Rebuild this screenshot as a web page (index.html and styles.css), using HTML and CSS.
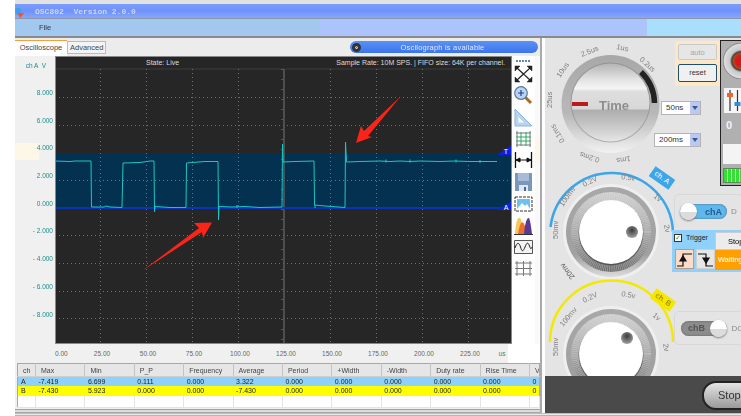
FILE: index.html
```html
<!DOCTYPE html>
<html lang="en">
<head>
    <meta charset="UTF-8">
    <meta name="viewport" content="width=device-width, initial-scale=1.0">
    <title>OSC802 Version 2.0.0</title>
    <link rel="stylesheet" href="styles.css">
</head>
<body>
    <div class="app">
        <div class="top-strip"></div>
        <div class="titlebar">
            <svg class="app-icon" viewBox="0 0 10 10"><circle cx="3" cy="3" r="3" fill="#3aa0f0"/><path d="M2 5h7L5.500 10z" fill="#f0562a"/></svg>
            <span class="app-title">OSC802  Version 2.0.0</span>
        </div>
        <div class="menubar">
            <span class="menu-item">File</span>
            <span class="menu-mid"></span>
            <span class="menu-end"></span>
        </div>

        <div class="workspace">
            <!-- Scope side -->
            <div class="scope-pane">
                <div class="tabs">
                    <span class="tab tab-active">Oscilloscope</span>
                    <span class="tab">Advanced</span>
                    <div class="status-bar">
                        <span class="play-btn"></span>
                        <span class="status-text">Oscilograph is available</span>
                    </div>
                </div>

                <div class="plot-row">
                    <div class="y-axis">
                        <div class="y-title">ch A  V</div>
                        <span>8.000</span>
                        <span>6.000</span>
                        <span class="y-cream">4.000</span>
                        <span>2.000</span>
                        <span>0.000</span>
                        <span>- 2.000</span>
                        <span>- 4.000</span>
                        <span>- 6.000</span>
                        <span>- 8.000</span>
                    </div>

                    <svg class="scope" viewBox="55 56 457 288" preserveAspectRatio="none">
                        <rect x="55" y="56" width="457" height="288" fill="#262626"/>
                        <rect x="55" y="153" width="457" height="55" fill="#04314f"/>
                        <path d="M55 69H512" stroke="#3d3d3d"/>
                        <path class="grid" d="M55 97.500H512M55 125.500H512M55 180.500H512M55 235.500H512M55 263.500H512M55 291.500H512M55 318.500H512"/>
                        <path class="grid" d="M100.500 69V344M146.500 69V344M192.500 69V344M238.500 69V344M330.500 69V344M376.500 69V344M422.500 69V344M468.500 69V344"/>
                        <path d="M284 69V344" stroke="#5c5c5c" stroke-width="1.500"/>
                        <path class="center-ticks" d="M282 69V344"/>
                        <path d="M55 208H512" stroke="#0a34b8" stroke-width="2"/>
                        <polyline class="trace" points="55,161 70,161.500 75,161 91,161 91.500,207 104,207 106,206 110,207 122,207.500 123,163 140,162.500 150,161 154,161 154.500,212 155,206.500 170,207.500 186,207.500 186.500,163 198,162 205,161.500 218,161.500 218.500,220 219,206.500 232,207 245,206.500 260,207.500 282,207 282.500,144 283,162 295,161.500 314,161 314.500,205 325,206 345,207.500 345.500,142 346.500,162 360,161.500 380,161 390,161.500 400,161 410,161.500 420,161 440,161.500 455,161 470,161.500 497,161.500"/>
                        <path class="trace" d="M386 159.500v3M410 159.500v3M456 159.500v3M480 160v3M237 205v3M315 205v3"/>
                        <path d="M512 145V155H497z" fill="#0a22e0"/>
                        <path d="M512 201V210H497z" fill="#0a22e0"/>
                        <text class="marker-text" x="506" y="154">T</text>
                        <text class="marker-text" x="506" y="210">A</text>
                        <text class="scope-text" x="146" y="65">State: Live</text>
                        <text class="scope-text" x="505" y="65" text-anchor="end">Sample Rate: 10M SPS. | FIFO size: 64K per channel.</text>
                        <!-- arrows drawn on the screenshot -->
                        <polygon class="arrow" points="142,271 199,228 194,223 212,222.500 203,238 202,232"/>
                        <polygon class="arrow" points="401,96 368,136 372,137 356,143 361,126 364,131"/>
                    </svg>

                    <div class="tools">
                        <svg width="19" height="2" viewBox="0 0 19 2"><path d="M2 1H17" stroke="#2a5fa0" stroke-width="1.500" stroke-dasharray="2 1"/></svg>
                        <svg width="19" height="18" viewBox="0 0 19 18" fill="#222" stroke="#222"><path d="M3 3L16 15M16 3L3 15" stroke-width="1.200"/><path d="M1 1H6L1 6zM18 1H13L18 6zM1 17H6L1 12zM18 17H13L18 12z" stroke-width="0.500"/></svg>
                        <svg width="19" height="19" viewBox="0 0 19 19"><path d="M11 11L17 17" stroke="#b06a20" stroke-width="3"/><circle cx="7" cy="7" r="6.300" fill="#b8d6f4" stroke="#5a7a9a" stroke-width="1.200"/><path d="M4 7H10M7 4V10" stroke="#24408a" stroke-width="1.200"/></svg>
                        <svg width="19" height="19" viewBox="0 0 19 19"><path d="M1 1V18H18z" fill="#b8d4f0" stroke="#8ab4e0"/><path d="M4.500 9V14.500H10z" fill="#fff"/></svg>
                        <svg width="19" height="18" viewBox="0 0 19 18" fill="none"><path d="M2 3H17M2 15H17M3 1V17M16 1V17" stroke="#777"/><path d="M2 7H17M2 11H17M7 2V16M12 2V16" stroke="#2aa860"/></svg>
                        <svg width="19" height="18" viewBox="0 0 19 18" fill="none" stroke="#111"><path d="M1.500 1V17M17.500 1V17" stroke-width="1.300"/><path d="M2 9H17"/><path d="M2 9L6 7V11zM17 9L13 7V11z" fill="#111"/></svg>
                        <svg width="19" height="20" viewBox="0 0 19 20"><path d="M1 1H18V19H1z" fill="#7a97bc"/><path d="M4 1H15V9H4z" fill="#a8bcd8"/><path d="M5 13H14V19H5z" fill="#dfe6f0"/><path d="M10 15H12V19H10z" fill="#49678f"/></svg>
                        <svg width="19" height="18" viewBox="0 0 19 18"><path d="M1 2H18V16H1z" fill="#fff" stroke="#333" stroke-dasharray="3 1"/><path d="M3 4H16V14H3z" fill="#6cc0f4"/><path d="M3 14L8 8L11 11L13 9L16 14z" fill="#fff"/></svg>
                        <svg width="19" height="19" viewBox="0 0 19 19"><path d="M1 18C2 4 4 1 6 2S8 12 9 18z" fill="#f6c860"/><path d="M4 18C6 6 8 5 9.500 7S12 14 13 18z" fill="#ef6f2e"/><path d="M10 18C11 6 13 2 14.500 2S17 10 18 18z" fill="#5a3a98"/><path d="M0 18.500H19" stroke="#333"/></svg>
                        <svg width="19" height="18" viewBox="0 0 19 18" fill="#f4f4f4"><path d="M.500 2.500H18.500V15.500H.500z" stroke="#555"/><path d="M1 10C3 4 5 4 6.500 9S9 14 11 9 14 4 15.500 8 17 11 18 9" fill="none" stroke="#222"/></svg>
                        <svg width="19" height="19" viewBox="0 0 19 19" fill="none" stroke="#777"><path d="M1 4H18M1 9.500H18M1 15H18M3 2V17M9.500 2V17M16 2V17"/></svg>
                    </div>
                    <div class="tools-gap"><span class="cream-patch"></span></div>
                </div>

                <div class="x-axis">
                    <span class="x-first">0.00</span>
                    <span>25.00</span>
                    <span>50.00</span>
                    <span>75.00</span>
                    <span>100.00</span>
                    <span>125.00</span>
                    <span>150.00</span>
                    <span>175.00</span>
                    <span>200.00</span>
                    <span>225.00</span>
                    <span class="x-unit">us</span>
                </div>

                <table class="measure">
                    <thead>
                        <tr><th>ch</th><th>Max</th><th>Min</th><th>P_P</th><th>Frequency</th><th>Average</th><th>Period</th><th>+Width</th><th>-Width</th><th>Duty rate</th><th>Rise Time</th><th>V</th></tr>
                    </thead>
                    <tbody>
                        <tr class="row-a"><td>A</td><td>-7.419</td><td>6.699</td><td>0.111</td><td>0.000</td><td>3.322</td><td>0.000</td><td>0.000</td><td>0.000</td><td>0.000</td><td>0.000</td><td>0</td></tr>
                        <tr class="row-b"><td>B</td><td>-7.430</td><td>5.923</td><td>0.000</td><td>0.000</td><td>-7.430</td><td>0.000</td><td>0.000</td><td>0.000</td><td>0.000</td><td>0.000</td><td>0</td></tr>
                        <tr class="row-empty"><td></td><td></td><td></td><td></td><td></td><td></td><td></td><td></td><td></td><td></td><td></td><td></td></tr>
                    </tbody>
                </table>
                <div class="pane-foot"></div>
            </div>

            <!-- Instrument panel, controls sit on a free canvas -->
            <div class="panel">
                <svg class="dials" viewBox="545 38 196 338">
                    <defs>
                        <linearGradient id="timeRim" x1="0" y1="0" x2="0" y2="1">
                            <stop offset="0" stop-color="#a8a8a8"/>
                            <stop offset="0.6" stop-color="#b8b8b8"/>
                            <stop offset="1" stop-color="#f2f2f2"/>
                        </linearGradient>
                        <linearGradient id="timeKnob" x1="0" y1="0" x2="0" y2="1">
                            <stop offset="0" stop-color="#b4b4b4"/>
                            <stop offset="0.12" stop-color="#cfcfcf"/>
                            <stop offset="0.2" stop-color="#e2e2e2"/>
                            <stop offset="0.32" stop-color="#f5f5f5"/>
                            <stop offset="0.36" stop-color="#dedede"/>
                            <stop offset="0.58" stop-color="#d8d8d8"/>
                            <stop offset="0.6" stop-color="#aeaeae"/>
                            <stop offset="0.72" stop-color="#bdbdbd"/>
                            <stop offset="0.85" stop-color="#cfcfcf"/>
                            <stop offset="1" stop-color="#e6e6e6"/>
                        </linearGradient>
                        <linearGradient id="ringShade" x1="0" y1="0" x2="0" y2="1">
                            <stop offset="0" stop-color="#cfcfcf"/>
                            <stop offset="0.5" stop-color="#a8a8a8"/>
                            <stop offset="1" stop-color="#6a6a6a"/>
                        </linearGradient>
                        <linearGradient id="rimShade" x1="0" y1="0" x2="0" y2="1">
                            <stop offset="0" stop-color="#a8a8a8"/>
                            <stop offset="0.75" stop-color="#a0a0a0"/>
                            <stop offset="1" stop-color="#dcdcdc"/>
                        </linearGradient>
                        <radialGradient id="dimple" cx="0.5" cy="0.35" r="0.6">
                            <stop offset="0" stop-color="#3a3a3a"/>
                            <stop offset="1" stop-color="#9a9a9a"/>
                        </radialGradient>
                    </defs>

                    <!-- time dial -->
                    <circle cx="610.500" cy="104" r="49" fill="url(#timeRim)"/>
                    <path d="M641 72A44 44 0 0 1 654.500 103" fill="none" stroke="#222" stroke-width="5.500"/>
                    <circle cx="610.500" cy="102.500" r="40" fill="#7e7e7e" opacity="0.5"/>
                    <circle cx="610.500" cy="102.500" r="39" fill="url(#timeKnob)"/>
                    <rect x="572" y="102" width="16" height="4" fill="#b81c1c"/>
                    <text class="time-text" x="614" y="110" text-anchor="middle">Time</text>
                    <text class="dial-label" transform="translate(552 108) rotate(-90)">25us</text>
                    <text class="dial-label" transform="translate(560 78) rotate(-55)">10us</text>
                    <text class="dial-label" transform="translate(582 57) rotate(-22)">2.5us</text>
                    <text class="dial-label" transform="translate(616 49) rotate(12)">1us</text>
                    <text class="dial-label" transform="translate(639 60) rotate(42)">0.2us</text>
                    <text class="dial-label" transform="translate(565 141) rotate(238)">0.1ms</text>
                    <text class="dial-label" transform="translate(600 158) rotate(198)">0.2ms</text>
                    <text class="dial-label" transform="translate(630 156) rotate(170)">1ms</text>

                    <!-- channel A dial -->
                    <path d="M550.500 227A61.500 61.500 0 0 1 673 232" fill="none" stroke="#3ba6ea" stroke-width="2.500"/>
                    <circle cx="611" cy="232" r="48" fill="#efefef"/>
                    <circle cx="611" cy="232" r="45" fill="url(#rimShade)"/>
                    <circle cx="611" cy="232" r="40" fill="url(#ringShade)"/>
                    <circle class="knurl" cx="611" cy="232" r="36"/>
                    <circle cx="611" cy="233" r="32.500" fill="#333" opacity="0.6"/>
                    <circle cx="611" cy="232" r="32" fill="#fff"/>
                    <circle cx="632" cy="232" r="6" fill="url(#dimple)"/>
                    <text class="dial-label" transform="translate(558 239) rotate(-90)">50mv</text>
                    <text class="dial-label" transform="translate(563 207) rotate(-55)">100mv</text>
                    <text class="dial-label" transform="translate(584 187) rotate(-25)">0.2V</text>
                    <text class="dial-label" transform="translate(621 179) rotate(8)">0.5v</text>
                    <text class="dial-label" transform="translate(653 197) rotate(40)">1v</text>
                    <text class="dial-label" transform="translate(664 225) rotate(80)">2v</text>
                    <text class="dial-label dial-dark" transform="translate(575 277) rotate(232)">20mv</text>

                    <!-- channel B dial -->
                    <path d="M550 342A61.500 61.500 0 0 1 673 342" fill="none" stroke="#f5e800" stroke-width="2.500"/>
                    <circle cx="611" cy="354" r="48" fill="#efefef"/>
                    <circle cx="611" cy="354" r="45" fill="url(#rimShade)"/>
                    <circle cx="611" cy="354" r="40" fill="url(#ringShade)"/>
                    <circle class="knurl" cx="611" cy="354" r="36"/>
                    <circle cx="611" cy="355" r="32.500" fill="#333" opacity="0.6"/>
                    <circle cx="611" cy="354" r="32" fill="#fff"/>
                    <circle cx="627" cy="338" r="6" fill="url(#dimple)"/>
                    <text class="dial-label" transform="translate(558 356) rotate(-90)">50mv</text>
                    <text class="dial-label" transform="translate(563 327) rotate(-50)">100mv</text>
                    <text class="dial-label" transform="translate(584 303) rotate(-25)">0.2V</text>
                    <text class="dial-label" transform="translate(621 296) rotate(10)">0.5v</text>
                    <text class="dial-label" transform="translate(652 316) rotate(40)">1v</text>
                    <text class="dial-label" transform="translate(663 344) rotate(80)">2v</text>
                </svg>

                <span class="ch-tag tag-a">ch. A</span>
                <span class="ch-tag tag-b">ch. B</span>

                <div class="select select-top"><span>50ns</span><i class="select-arrow"></i></div>
                <div class="select select-low"><span>200ms</span><i class="select-arrow"></i></div>

                <div class="auto-box">
                    <span class="auto-btn">auto</span>
                    <span class="reset-btn">reset</span>
                </div>

                <div class="device">
                    <span class="device-knob"></span>
                    <div class="sliders">
                        <svg width="17" height="25" viewBox="0 0 17 25"><path d="M6 2V23M13.500 2V23" stroke="#333" stroke-width="1.200"/><rect x="3" y="5" width="6" height="4" fill="#f0642a"/><rect x="10.500" y="14" width="6" height="4" fill="#2a90e0"/></svg>
                    </div>
                    <span class="device-zero">0</span>
                    <span class="device-white"></span>
                    <span class="device-meter"></span>
                </div>

                <div class="ch-box box-a">
                    <div class="toggle toggle-a"><b class="thumb"></b><span>chA</span></div>
                    <span class="dc-text">D</span>
                </div>

                <div class="trigger">
                    <div class="trigger-left">
                        <label class="trigger-check"><i class="check">&#10003;</i>Trigger</label>
                        <div class="edges">
                            <span class="edge edge-on"><svg width="17" height="17" viewBox="0 0 17 17" fill="none" stroke="#111" stroke-width="1.200"><path d="M1 15H7V3H16"/><path d="M7 5L10 10H4z" fill="#111"/></svg></span>
                            <span class="edge"><svg width="17" height="17" viewBox="0 0 17 17" fill="none" stroke="#111" stroke-width="1.200"><path d="M1 3H9V15H16"/><path d="M9 12L6 7H12z" fill="#111"/></svg></span>
                        </div>
                    </div>
                    <div class="trigger-right">
                        <span class="trig-stop">Stop</span>
                        <span class="trig-wait">Waiting</span>
                    </div>
                </div>

                <div class="ch-box box-b">
                    <div class="toggle toggle-b"><span>chB</span><b class="thumb"></b></div>
                    <span class="dc-text">DC</span>
                </div>

                <div class="bottom-bar">
                    <span class="stop-btn">Stop</span>
                </div>
            </div>
        </div>

        <div class="foot-bars"></div>
    </div>
</body>
</html>
```

FILE: styles.css
```css
* {
    box-sizing: border-box;
    margin: 0;
    padding: 0;
}

body {
    font-family: 'Liberation Sans', Arial, sans-serif;
    background: #fff;
    width: 741px;
    height: 416px;
    overflow: hidden;
}

.app {
    margin-left: 15px;
    height: 416px;
    display: flex;
    flex-direction: column;
    filter: blur(0.35px);
}

/* Window chrome */
.top-strip {
    height: 4px;
    background: #e2e2e2;
}

.titlebar {
    height: 15px;
    background: linear-gradient(#7b9dfb 0%, #6f92fb 50%, #86a8fb 100%);
    border-bottom: 1px solid #8d95ad;
    display: flex;
    align-items: center;
}

.app-icon {
    width: 10px;
    height: 10px;
    margin-top: 3px;
}

.app-title {
    font-family: 'Liberation Mono', monospace;
    font-size: 8px;
    font-weight: bold;
    white-space: pre;
    color: #cdd5f2;
    margin-left: 10px;
}

.menubar {
    height: 19px;
    background: #a3c8f0;
    border-bottom: 2px solid #8a8a8a;
    display: flex;
    align-items: center;
}

.menu-item {
    font-size: 7.500px;
    color: #333;
    padding-left: 24px;
    width: 305px;
}

.menu-mid {
    width: 327px;
    height: 100%;
    background: #abc4fc;
}

.menu-end {
    flex: 1;
    height: 100%;
    background: #a9defd;
}

.workspace {
    height: 375px;
    display: flex;
}

/* Scope pane */
.scope-pane {
    width: 527px;
    background: #f0f0f0;
    border-right: 2px solid #aaa;
    display: flex;
    flex-direction: column;
}

.tabs {
    height: 18px;
    display: flex;
    align-items: flex-end;
    position: relative;
    background: #ececec;
}

.tab {
    font-size: 7.500px;
    color: #444;
    height: 13px;
    line-height: 12px;
    padding: 0 2px;
    background: #f4f4f4;
    border: 1px solid #bbb;
    margin-bottom: 2px;
}

.tab-active {
    width: 52px;
    height: 16px;
    line-height: 13px;
    margin-bottom: 0;
    text-align: center;
    background: #fff;
    border: none;
    border-top: 1px solid #f0a040;
}

.status-bar {
    position: absolute;
    left: 335px;
    top: 3px;
    width: 188px;
    height: 12px;
    border-radius: 6px;
    background: linear-gradient(#5a92f4, #3c74ee);
    display: flex;
    align-items: center;
}

.play-btn {
    width: 9px;
    height: 9px;
    margin-left: 2px;
    border-radius: 50%;
    background: #333;
    border: 3px solid #333;
    box-shadow: inset 0 0 0 1px #eee;
}

.status-text {
    flex: 1;
    text-align: center;
    font-size: 7.500px;
    letter-spacing: 0.2px;
    color: #dfe8fb;
    padding-right: 14px;
}

.plot-row {
    display: flex;
    height: 288px;
}

.y-axis {
    width: 40px;
    display: flex;
    flex-direction: column;
    font-size: 6.500px;
    color: #1d8c8c;
    text-align: right;
    padding-right: 2px;
}

.y-axis span {
    height: 27.700px;
    line-height: 27.700px;
    white-space: pre;
}

.y-axis .y-cream {
    background: linear-gradient(90deg, #fdf7e8 24px, transparent 24px) 0 9px / 100% 17px no-repeat;
    margin-right: -2px;
    padding-right: 2px;
}

.y-title {
    height: 23px;
    padding-top: 6px;
    padding-right: 7px;
    white-space: pre;
}

.scope {
    width: 457px;
    height: 288px;
    display: block;
    outline: 1px solid #888;
    outline-offset: -1px;
}

.grid {
    fill: none;
    stroke: #6e6e6e;
    stroke-width: 1;
    stroke-dasharray: 1 3;
}

.center-ticks {
    fill: none;
    stroke: #8a8a8a;
    stroke-width: 1;
    stroke-dasharray: 1 9;
}

.trace {
    fill: none;
    stroke: #1cc6c6;
    stroke-width: 1;
}

.marker-text {
    font-size: 7px;
    fill: #fff;
    text-anchor: middle;
}

.scope-text {
    font-size: 7px;
    fill: #dcdcdc;
}

.arrow {
    fill: #fb2418;
}

.tools {
    width: 23px;
    background: #fff;
    display: flex;
    flex-direction: column;
    align-items: center;
    gap: 3px;
    padding-top: 4px;
}

.tools-gap {
    flex: 1;
    background: #f9f9f9;
    padding-top: 82px;
}

.cream-patch {
    display: block;
    height: 24px;
    background: #fdf7e8;
}

.x-axis {
    height: 19px;
    display: flex;
    padding-left: 25px;
    font-size: 6.500px;
    color: #666;
    background: linear-gradient(90deg, #f0f0f0 94%, #fff 94%);
}

.x-axis span {
    width: 46px;
    text-align: center;
    line-height: 20px;
}

.x-axis .x-first {
    width: 39px;
    text-align: left;
    padding-left: 15px;
}

.x-axis .x-unit {
    width: 18px;
    color: #1d8c8c;
}

/* Measurement table */
.measure {
    margin-left: 2px;
    width: 523px;
    height: 44px;
    flex: none;
    table-layout: fixed;
    border-collapse: collapse;
    border: 1px solid #a8a8a8;
    background: #fff;
    font-size: 7px;
    color: #222;
}

.measure th {
    width: 49.400px;
    height: 13px;
    font-weight: normal;
    text-align: left;
    padding: 0 0 0 5px;
    background: #e6e6e6;
    border-right: 1px solid #c4c4c4;
    border-bottom: 1px solid #cfcfcf;
    color: #444;
    overflow: hidden;
    white-space: nowrap;
}

.measure th:first-child {
    width: 18px;
}

.measure th:last-child {
    width: 10px;
    border-right: none;
}

.measure td {
    height: 9.500px;
    line-height: 8px;
    padding: 0 0 0 3px;
    overflow: hidden;
    white-space: nowrap;
    border-right: 1px solid #e4e4e4;
}

.row-a td {
    background: #8fd1fb;
}

.row-b td {
    background: #ffff00;
}

.row-a td, .row-b td {
    border-right: none;
}

.row-empty td {
    height: 12px;
    border-bottom: 1px solid #e4e4e4;
}

.pane-foot {
    flex: 1;
    background: linear-gradient(#f0f0f0 0 1px, #a0a0a0 1px 2px, #dcdcdc 2px 4px, #a8a8a8 4px);
}

/* Instrument panel */
.panel {
    flex: 1;
    position: relative;
    margin-left: 3px;
    background: #e4e4e4;
    overflow: hidden;
}

.dials {
    position: absolute;
    left: 0;
    top: 0;
    width: 196px;
    height: 338px;
}

.dial-label {
    font-size: 7.500px;
    fill: #808080;
}

.dial-dark {
    fill: #555;
}

.time-text {
    font-size: 13px;
    font-weight: bold;
    fill: #8e8e8e;
}

.knurl {
    fill: none;
    stroke: #e8e8e8;
    stroke-width: 8;
    stroke-dasharray: 0.8 1;
    opacity: 0.35;
}

.ch-tag {
    position: absolute;
    width: 24px;
    height: 12px;
    font-size: 7.500px;
    line-height: 12px;
    text-align: center;
    transform: rotate(35deg);
}

.tag-a {
    left: 105px;
    top: 134px;
    background: #3ba6ea;
    color: #fff;
}

.tag-b {
    left: 106px;
    top: 256px;
    background: #f5e800;
    color: #8a7a10;
}

.select {
    position: absolute;
    height: 14px;
    background: #fff;
    border: 1px solid #b4b4b4;
    font-size: 8px;
    line-height: 12px;
    color: #333;
    padding-left: 4px;
    display: flex;
    justify-content: space-between;
}

.select-top {
    left: 116px;
    top: 63px;
    width: 40px;
}

.select-low {
    left: 109px;
    top: 95px;
    width: 47px;
}

.select-arrow {
    width: 10px;
    background: #b9c8f4;
    position: relative;
}

.select-arrow::after {
    content: "";
    position: absolute;
    left: 2px;
    top: 4px;
    border: 3px solid transparent;
    border-top: 4px solid #44587c;
}

.auto-box {
    position: absolute;
    left: 130px;
    top: 3px;
    width: 45px;
    height: 45px;
    background: #fde7c4;
    display: flex;
    flex-direction: column;
    align-items: center;
    gap: 4px;
    padding-top: 3px;
}

.auto-btn, .reset-btn {
    width: 39px;
    font-size: 7.500px;
    text-align: center;
    border-radius: 2px;
}

.auto-btn {
    height: 16px;
    line-height: 16px;
    color: #a8a8a8;
    background: #e6e6e6;
    border: 1px solid #cacaca;
}

.reset-btn {
    height: 18px;
    line-height: 16px;
    color: #333;
    background: #f0f0f0;
    border: 1px solid #1c4f72;
}

.device {
    position: absolute;
    left: 175px;
    top: 2px;
    width: 30px;
    height: 146px;
    background: #b0b0b0;
    border: 1px solid #222;
}

.device-knob {
    position: absolute;
    left: 2px;
    top: 2px;
    width: 36px;
    height: 36px;
    border-radius: 50%;
    background: radial-gradient(circle, #d81818 0 20%, #b04a18 30%, #444 36%, #c8c8c8 44%, #ddd 66%, #2c2c2c 74%, #2c2c2c 100%);
}

.sliders {
    position: absolute;
    left: 3px;
    top: 47px;
    width: 30px;
    height: 25px;
    background: #f6f6f6;
}

.device-zero {
    position: absolute;
    left: 5px;
    top: 78px;
    font-size: 11px;
    font-weight: bold;
    color: #f4f4f4;
}

.device-white {
    position: absolute;
    left: 2px;
    top: 103px;
    width: 30px;
    height: 20px;
    background: #f4f4f4;
}

.device-meter {
    position: absolute;
    left: 2px;
    top: 127px;
    width: 30px;
    height: 15px;
    padding: 2px;
    border: 1px solid #5a8a5a;
    background: repeating-linear-gradient(90deg, #34e034 0 3px, #c8f4c0 3px 4px);
}

.ch-box {
    position: absolute;
    left: 129px;
    width: 70px;
    border: 1px solid #d8d8d8;
    border-radius: 5px;
    display: flex;
    align-items: center;
}

.box-a {
    top: 156px;
    height: 34px;
    border-bottom: none;
    padding-left: 5px;
}

.box-b {
    top: 273px;
    height: 34px;
    padding-left: 6px;
}

.toggle {
    width: 47px;
    height: 15px;
    border-radius: 8px;
    display: flex;
    align-items: center;
    justify-content: space-between;
    font-size: 9px;
    font-weight: bold;
    box-shadow: inset 0 0 2px #555;
}

.toggle-a {
    background: #5db8f0;
    color: #2a5a80;
    padding-right: 5px;
}

.toggle-b {
    background: #8c8c8c;
    color: #555;
    padding-left: 7px;
}

.thumb {
    width: 17px;
    height: 17px;
    border-radius: 50%;
    background: linear-gradient(#fff 50%, #dcdcdc 51%);
    box-shadow: 0 1px 2px #777;
}

.dc-text {
    font-size: 8px;
    color: #8a8a8a;
    margin-left: 4px;
}

.trigger {
    position: absolute;
    left: 127px;
    top: 192px;
    width: 72px;
    height: 42px;
    background: #8fd1fb;
    display: flex;
}

.trigger-left {
    width: 46px;
    padding: 3px 0 0 2px;
}

.trigger-check {
    display: flex;
    align-items: center;
    gap: 4px;
    font-size: 7px;
    color: #222;
    height: 9px;
}

.check {
    width: 8px;
    height: 8px;
    background: #fff;
    border: 1px solid #333;
    color: #1a9a3a;
    font-size: 7px;
    line-height: 6px;
    font-style: normal;
    text-align: center;
}

.edges {
    display: flex;
    gap: 2px;
    margin-top: 7px;
    padding-left: 1px;
}

.edge {
    width: 19px;
    height: 20px;
    background: #e6e6e6;
    border: 1px solid #cfcfcf;
    display: flex;
    align-items: center;
    justify-content: center;
}

.edge-on {
    background: #fbdcc8;
    border-color: #b89a88;
}

.trigger-right {
    flex: 1;
    display: flex;
    flex-direction: column;
    padding-top: 2px;
    font-size: 7.500px;
}

.trig-stop {
    height: 18px;
    line-height: 18px;
    padding-left: 12px;
    background: #ececec;
    border: 1px solid #ccc;
    white-space: nowrap;
    overflow: hidden;
}

.trig-wait {
    height: 20px;
    line-height: 20px;
    padding-left: 3px;
    background: #ffa000;
    color: #fff;
    white-space: nowrap;
}

.bottom-bar {
    position: absolute;
    left: 0;
    right: 0;
    top: 338px;
    height: 37px;
    background: #4a4a4a;
}

.stop-btn {
    position: absolute;
    left: 157px;
    top: 5px;
    width: 60px;
    height: 29px;
    padding-left: 14px;
    border-radius: 14px;
    border: 2px solid #222;
    background: linear-gradient(#e4e4e4, #9a9a9a);
    font-size: 11px;
    line-height: 25px;
    color: #333;
}

.foot-bars {
    flex: 1;
    background: linear-gradient(#bdbdbd 0 1px, #e8e8e8 1px 2px, #b4b4b4 2px);
}
```
